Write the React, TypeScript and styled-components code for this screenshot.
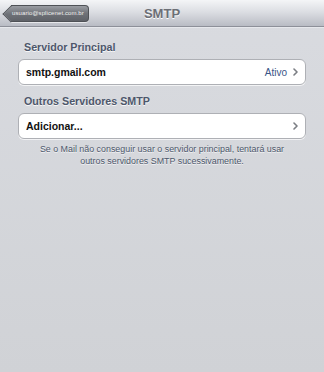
import React from "react";
import styled, { createGlobalStyle } from "styled-components";

const GlobalStyle = createGlobalStyle`
  html, body {
    margin: 0;
    padding: 0;
    background: #d6d8dd;
  }
  body {
    font-family: "Liberation Sans", Arial, sans-serif;
    -webkit-font-smoothing: antialiased;
  }
`;

const Screen = styled.div`
  width: 324px;
  height: 372px;
  background: linear-gradient(#d9dbe0, #d0d2d6);
  overflow: hidden;
`;

const NavBar = styled.header`
  height: 26px;
  display: grid;
  grid-template-columns: 1fr auto 1fr;
  align-items: center;
  background: linear-gradient(#f4f5f7 0%, #dcdee3 45%, #b9bcc4 100%);
  border-bottom: 1px solid #8d9099;
  box-shadow: 0 1px 0 #e6e8ec;
`;

const BackButton = styled.button`
  position: relative;
  justify-self: start;
  margin-left: 11px;
  height: 17px;
  padding: 0 4px 0 1px;
  border: 1px solid #4e5156;
  border-left: none;
  border-radius: 0 4px 4px 0;
  background: linear-gradient(#9a9da3, #6f7278 50%, #5f6268);
  color: #f2f2f2;
  font-family: "Liberation Sans", Arial, sans-serif;
  font-size: 6px;
  letter-spacing: 0.1px;
  line-height: 15px;
  white-space: nowrap;
  box-shadow: 0 1px 0 rgba(255, 255, 255, 0.6);

  &::before {
    content: "";
    position: absolute;
    left: -6px;
    top: 2px;
    width: 11px;
    height: 11px;
    transform: rotate(45deg);
    background: linear-gradient(135deg, #9a9da3, #6f7278 50%, #5f6268);
    border-left: 1px solid #4e5156;
    border-bottom: 1px solid #4e5156;
    z-index: 0;
  }

  span {
    position: relative;
    z-index: 1;
  }
`;

const Title = styled.h1`
  margin: 0;
  font-size: 13px;
  font-weight: bold;
  color: #6c6f76;
  text-shadow: 0 1px 0 #ffffff;
`;

const Content = styled.main`
  padding: 13px 18px 0 18px;
  display: flex;
  flex-direction: column;
`;

const SectionHeader = styled.h2<{ $gap?: number }>`
  margin: ${(p) => p.$gap ?? 0}px 0 5px 6px;
  font-size: 10.7px;
  line-height: 14px;
  font-weight: bold;
  color: #4d576b;
  text-shadow: 0 1px 0 rgba(255, 255, 255, 0.8);
`;

const Cell = styled.div`
  height: 24px;
  display: flex;
  align-items: center;
  padding: 0 7px 0 7px;
  background: #ffffff;
  border: 1px solid #aeb0b5;
  border-radius: 6px;
  box-shadow: 0 1px 0 rgba(255, 255, 255, 0.7);
`;

const CellLabel = styled.span`
  flex: 1;
  font-size: 10.5px;
  font-weight: bold;
  color: #111;
`;

const CellValue = styled.span`
  font-size: 10px;
  color: #3a5587;
  margin-right: 6px;
`;

const Chevron = () => (
  <svg width="5" height="8" viewBox="0 0 5 8">
    <path
      d="M1 1 L4 4 L1 7"
      fill="none"
      stroke="#7b7e84"
      strokeWidth="1.6"
      strokeLinecap="round"
      strokeLinejoin="round"
    />
  </svg>
);

const Footer = styled.p`
  margin: 4px 0 0;
  font-size: 8.9px;
  line-height: 12px;
  text-align: center;
  color: #4d576b;
  text-shadow: 0 1px 0 rgba(255, 255, 255, 0.7);
`;

export default function App() {
  return (
    <Screen>
      <GlobalStyle />
      <NavBar>
        <BackButton>
          <span>usuario@splicenet.com.br</span>
        </BackButton>
        <Title>SMTP</Title>
        <div />
      </NavBar>
      <Content>
        <SectionHeader>Servidor Principal</SectionHeader>
        <Cell>
          <CellLabel>smtp.gmail.com</CellLabel>
          <CellValue>Ativo</CellValue>
          <Chevron />
        </Cell>
        <SectionHeader $gap={9}>Outros Servidores SMTP</SectionHeader>
        <Cell>
          <CellLabel>Adicionar...</CellLabel>
          <Chevron />
        </Cell>
        <Footer>
          Se o Mail não conseguir usar o servidor principal, tentará usar
          <br />
          outros servidores SMTP sucessivamente.
        </Footer>
      </Content>
    </Screen>
  );
}
